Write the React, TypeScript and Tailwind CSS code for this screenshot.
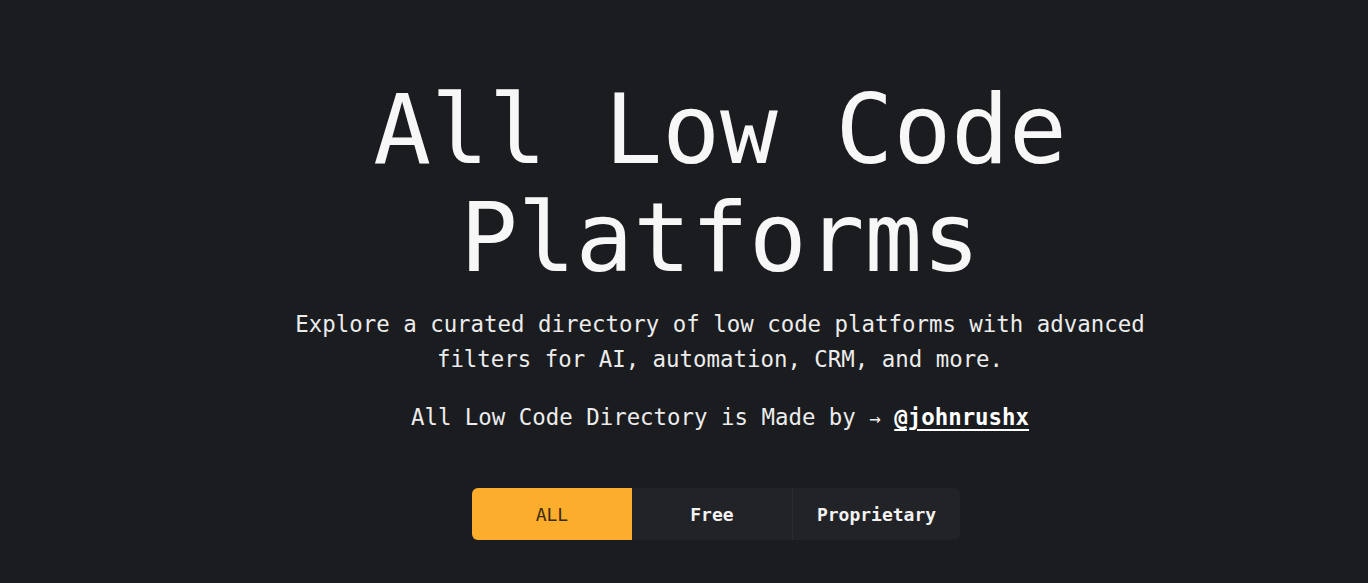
import { useState } from "react";

const FILTERS = ["ALL", "Free", "Proprietary"];

export default function App() {
  const [active, setActive] = useState("ALL");

  return (
    <div className="min-h-screen bg-[#1b1c20] text-white font-['DejaVu_Sans_Mono',monospace]">
      <main className="flex flex-col items-center pt-[76px] pl-[72px] text-center">
        <h1 className="text-[96px] leading-[108px] font-normal text-[#f7f7f7]">
          All Low Code
          <br />
          Platforms
        </h1>

        <p className="mt-[15px] max-w-[880px] text-[22.4px] leading-[35px] text-[#ececec]">
          Explore a curated directory of low code platforms with advanced
          filters for AI, automation, CRM, and more.
        </p>

        <p className="mt-[23px] text-[22.4px] leading-[35px] text-[#ececec]">
          All Low Code Directory is Made by <span className="text-[19px]">→</span>{" "}
          <a href="#" className="font-bold text-white underline underline-offset-4 decoration-2">
            @johnrushx
          </a>
        </p>

        {/* Filter tabs */}
        <div className="mt-[52px] -ml-2 flex rounded-md bg-[#222327] overflow-hidden">
          {FILTERS.map((f, i) => (
            <button
              key={f}
              onClick={() => setActive(f)}
              className={`h-[52px] min-w-[160px] px-6 text-[18px] ${
                i === 2 ? "border-l border-[#2a2b30]" : ""
              } ${
                active === f
                  ? "bg-[#fbad2b] text-[#3b2b12] font-medium"
                  : "text-[#f2f2f2] font-bold"
              }`}
            >
              {f}
            </button>
          ))}
        </div>
      </main>
    </div>
  );
}
